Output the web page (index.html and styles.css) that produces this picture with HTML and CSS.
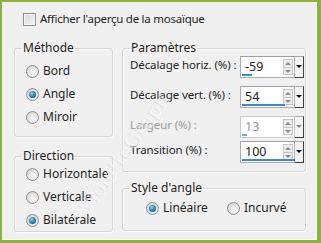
FILE: index.html
```html
<!DOCTYPE html>
<html lang="fr">
<head>
<meta charset="utf-8">
<link rel="stylesheet" href="styles.css">
</head>
<body>
<div class="frame">
  <label class="check-row"><span class="checkbox"></span><span class="check-text">Afficher l'aperçu de la mosaïque</span></label>
  <div class="main">
    <div class="col col-left">
      <fieldset class="group g-methode">
        <legend>Méthode</legend>
        <div class="radios">
          <div class="radio-row"><span class="radio"></span>Bord</div>
          <div class="radio-row"><span class="radio on"></span>Angle</div>
          <div class="radio-row"><span class="radio"></span>Miroir</div>
        </div>
      </fieldset>
      <fieldset class="group g-direction">
        <legend>Direction</legend>
        <div class="radios">
          <div class="radio-row"><span class="radio"></span>Horizontale</div>
          <div class="radio-row"><span class="radio"></span>Verticale</div>
          <div class="radio-row"><span class="radio on"></span>Bilatérale</div>
        </div>
      </fieldset>
    </div>
    <div class="col col-right">
      <fieldset class="group g-params">
        <legend>Paramètres</legend>
        <div class="param">
          <span class="plabel">Décalage horiz. (%) :</span>
          <span class="spin"><span class="field"><span class="val">-59</span><span class="arrows"><span class="up"></span><span class="down"></span></span><span class="bar" style="width:10px"></span></span><span class="drop"></span></span>
        </div>
        <div class="param">
          <span class="plabel">Décalage vert. (%) :</span>
          <span class="spin"><span class="field"><span class="val">54</span><span class="arrows"><span class="up"></span><span class="down"></span></span><span class="bar" style="width:43px"></span></span><span class="drop"></span></span>
        </div>
        <div class="param disabled">
          <span class="plabel">Largeur (%) :</span>
          <span class="spin"><span class="field"><span class="val">13</span><span class="arrows"><span class="up"></span><span class="down"></span></span><span class="bar" style="width:5px"></span></span><span class="drop"></span></span>
        </div>
        <div class="param">
          <span class="plabel">Transition (%) :</span>
          <span class="spin"><span class="field"><span class="val">100</span><span class="arrows"><span class="up"></span><span class="down"></span></span><span class="bar" style="width:53px"></span></span><span class="drop"></span></span>
        </div>
      </fieldset>
      <fieldset class="group g-style">
        <legend>Style d'angle</legend>
        <div class="hradios">
          <div class="radio-row"><span class="radio on"></span>Linéaire</div>
          <div class="radio-row"><span class="radio"></span>Incurvé</div>
        </div>
      </fieldset>
    </div>
  </div>
  <div class="watermark">VioletteGraph</div>
</div>
</body>
</html>
```
FILE: styles.css
```css
* { box-sizing: border-box; }
html, body { margin: 0; padding: 0; }
body {
  width: 321px; height: 243px; overflow: hidden;
  font-family: "Noto Sans", "DejaVu Sans", sans-serif;
  font-size: 12px; color: #1e1e1e;
}
.frame {
  position: relative;
  width: 321px; height: 243px;
  background: #f0f0f0;
  border-style: solid;
  border-color: #8cb43c;
  border-width: 2px 4px 3px 2px;
  box-shadow: inset -1px -1px 0 #f8f8f8;
}
.check-row {
  display: flex; align-items: center; gap: 4px;
  height: 14px;
  margin: 10px 0 0 21px;
  line-height: 14px;
}
.check-text { font-size: 11.5px; letter-spacing: -0.25px; }
.checkbox {
  width: 13px; height: 13px;
  border: 1px solid #8e8f8f;
  background: linear-gradient(135deg, #d8d8d8, #f4f4f4);
  box-shadow: inset 0 0 0 1px #f6f6f6;
}
.main {
  display: flex; gap: 9px;
  margin: 15px 0 0 12px;
}
.col { display: flex; flex-direction: column; }
.col-left { width: 99px; gap: 12px; }
.col-right { width: 184px; gap: 9px; }
.group {
  margin: 0; padding: 0 0 0 7px;
  border: 1px solid #d5d5d5;
  border-radius: 3px;
  box-shadow: inset 1px 1px 0 #fbfbfb, 1px 1px 0 #fbfbfb;
  min-width: 0;
}
.group legend {
  padding: 0 1px; margin-left: 0;
  line-height: 14px; font-size: 12px;
}
.g-methode { height: 96px; }
.g-direction { height: 83px; }
.g-params { height: 131px; }
.g-style { height: 50px; }
.radios { display: flex; flex-direction: column; gap: 9px; padding: 9px 0 0 4px; }
.g-direction .radios { padding-top: 4px; }
.radio-row { display: flex; align-items: center; gap: 4px; height: 14px; line-height: 14px; }
.radio {
  width: 13px; height: 13px; border-radius: 50%;
  border: 1px solid #8d8d8d;
  background: radial-gradient(circle at 60% 65%, #fbfbfb 0, #e6e6e6 45%, #c9c9c9 100%);
  position: relative; flex: none;
}
.radio.on::after {
  content: ""; position: absolute; left: 2px; top: 2px;
  width: 7px; height: 7px; border-radius: 50%;
  background: radial-gradient(circle at 40% 35%, #8fd3f5 0, #2a7fb8 50%, #0b4d78 100%);
}
.hradios { display: flex; padding: 6px 0 0 16px; }
.hradios .radio-row:first-child { width: 81px; }
.param {
  display: flex; justify-content: space-between; align-items: flex-start;
  height: 22px; padding-right: 1px;
  margin-top: 8px;
}
.param:first-of-type { margin-top: 1px; }
.param:last-child { margin-top: 3px; }
.plabel { line-height: 14px; padding-top: 2px; white-space: nowrap; font-size: 11.5px; letter-spacing: -0.1px; }
.spin { display: flex; height: 22px; flex: none; }
.field {
  position: relative; display: flex; align-items: flex-start;
  width: 55px; height: 22px;
  background: #fff;
  border: 1px solid #abadb3;
  border-top-color: #9c9fa7;
}
.val { flex: 1; padding: 3px 0 0 4px; line-height: 14px; font-size: 12.5px; }
.arrows {
  width: 10px; height: 16px; margin: 2px 1px 0 0;
  display: flex; flex-direction: column;
  border: 1px solid #c6c6c6; background: #eeeeee;
}
.arrows span { flex: 1; position: relative; }
.arrows .up::after, .arrows .down::after {
  content: ""; position: absolute; left: 1px;
  border-left: 3px solid transparent; border-right: 3px solid transparent;
}
.arrows .up::after { top: 2px; border-bottom: 3px solid #8a8a8a; }
.arrows .down::after { top: 2px; border-top: 3px solid #8a8a8a; }
.arrows .down { border-top: 1px solid #c6c6c6; }
.bar {
  position: absolute; left: 1px; bottom: 1px; height: 2px;
  background: #3a8bd6;
}
.drop {
  width: 9px; height: 22px; position: relative;
  background: #f4f4f4;
  border: 1px solid #a8a8a8; border-left: none;
  border-right-color: #404040; border-bottom-color: #404040;
}
.drop::after {
  content: ""; position: absolute; left: 1px; top: 8px;
  border-left: 3px solid transparent; border-right: 3px solid transparent;
  border-top: 3px solid #000;
}
.disabled .plabel, .disabled .val { color: #9a9a9a; }
.disabled .field { border-color: #c9c9c9; }
.disabled .bar { background: #6aa8e0; }
.disabled .drop::after { border-top-color: #888; }
.watermark {
  position: absolute; left: 50px; top: 140px;
  transform: rotate(-55deg);
  font-size: 20px; font-family: "DejaVu Serif", serif;
  color: rgba(0,0,0,0.06);
  text-shadow: 1px 1px 0 rgba(255,255,255,0.6);
  pointer-events: none;
}
```
